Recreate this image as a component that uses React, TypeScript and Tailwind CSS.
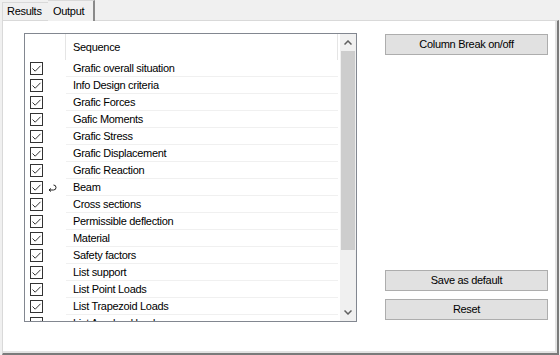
import React from "react";

const rows = [
  "Grafic overall situation",
  "Info Design criteria",
  "Grafic Forces",
  "Gafic Moments",
  "Grafic Stress",
  "Grafic Displacement",
  "Grafic Reaction",
  "Beam",
  "Cross sections",
  "Permissible deflection",
  "Material",
  "Safety factors",
  "List support",
  "List Point Loads",
  "List Trapezoid Loads",
  "List Areaload loads",
];

function Check() {
  return (
    <div className="w-[13px] h-[13px] border border-[#333333] bg-white flex items-center justify-center">
      <svg width="11" height="11" viewBox="0 0 11 11">
        <path d="M1.5 5.5 L4.2 8.2 L9.5 2.8" fill="none" stroke="#333333" strokeWidth="1" />
      </svg>
    </div>
  );
}

function ReturnMark() {
  return (
    <svg width="9" height="8" viewBox="0 0 9 8" className="ml-[5px]">
      <path d="M3 4.5 L1 6 L3 7.5 M1 6 H5.5 Q8 6 8 3.5 Q8 1 5.5 1" fill="none" stroke="#222" strokeWidth="1" />
    </svg>
  );
}

function Chevron({ down }: { down?: boolean }) {
  return (
    <svg width="8" height="5" viewBox="0 0 8 5">
      <path
        d={down ? "M0.5 0.5 L4 4 L7.5 0.5" : "M0.5 4.5 L4 1 L7.5 4.5"}
        fill="none"
        stroke="#606060"
        strokeWidth="1.5"
      />
    </svg>
  );
}

function Button({ label }: { label: string }) {
  return (
    <div className="h-[21px] w-full bg-[#e1e1e1] border border-[#adadad] flex items-center justify-center">
      {label}
    </div>
  );
}

export default function App() {
  return (
    <div className="w-[560px] h-[355px] bg-[#f0f0f0] text-[11px] tracking-[-0.3px] text-black font-['Liberation_Sans',Arial,sans-serif] flex flex-col overflow-hidden">
      {/* tab strip */}
      <div className="h-[20px] flex items-end pl-[2px]">
        <div className="h-[18px] w-[46px] border-l border-t border-[#d9d9d9] bg-[#f0f0f0] flex items-center pl-[4px]">
          Results
        </div>
        <div className="relative z-10 h-[21px] w-[47px] mb-[-1px] border-t border-[#d9d9d9] border-r-2 border-r-[#8a8a8a] bg-[#f0f0f0] flex items-center pl-[5px]">
          Output
        </div>
      </div>

      {/* tab page */}
      <div className="h-[335px] w-[557px] ml-[2px] bg-white border-t border-l border-[#d9d9d9] border-r-2 border-b-2 border-r-[#7a7a7a] border-b-[#7a7a7a]">
        <div className="h-full w-full border-r-2 border-b-2 border-[#e3e3e3] flex items-start">
          {/* list */}
          <div className="ml-[21px] mt-[12px] w-[333px] h-[289px] border border-[#828790] flex bg-white">
            <div className="w-[315px] h-full overflow-hidden">
              <div className="h-[26px] flex">
                <div className="w-[41px] h-full border-r border-[#e5e5e5]" />
                <div className="w-[272px] h-full border-r border-[#e5e5e5] pl-[7px] flex items-center">
                  Sequence
                </div>
              </div>
              {rows.map((r, i) => (
                <div key={r} className="h-[17px] flex">
                  <div className="w-[41px] h-full flex items-center pl-[5px]">
                    <Check />
                    {i === 7 && <ReturnMark />}
                  </div>
                  <div className="w-[272px] h-full border-b border-[#f0f0f0] pl-[7px] flex items-center">
                    {r}
                  </div>
                </div>
              ))}
            </div>
            {/* scrollbar */}
            <div className="w-[16px] h-full bg-[#f0f0f0] flex flex-col">
              <div className="h-[17px] flex items-center justify-center">
                <Chevron />
              </div>
              <div className="h-[199px] mx-[1px] bg-[#cdcdcd]" />
              <div className="flex-1" />
              <div className="h-[17px] flex items-center justify-center">
                <Chevron down />
              </div>
            </div>
          </div>

          {/* buttons */}
          <div className="ml-[28px] mt-[13px] w-[163px] h-[286px] flex flex-col">
            <Button label="Column Break on/off" />
            <div className="flex-1" />
            <Button label="Save as default" />
            <div className="h-[8px]" />
            <Button label="Reset" />
          </div>
        </div>
      </div>
    </div>
  );
}
